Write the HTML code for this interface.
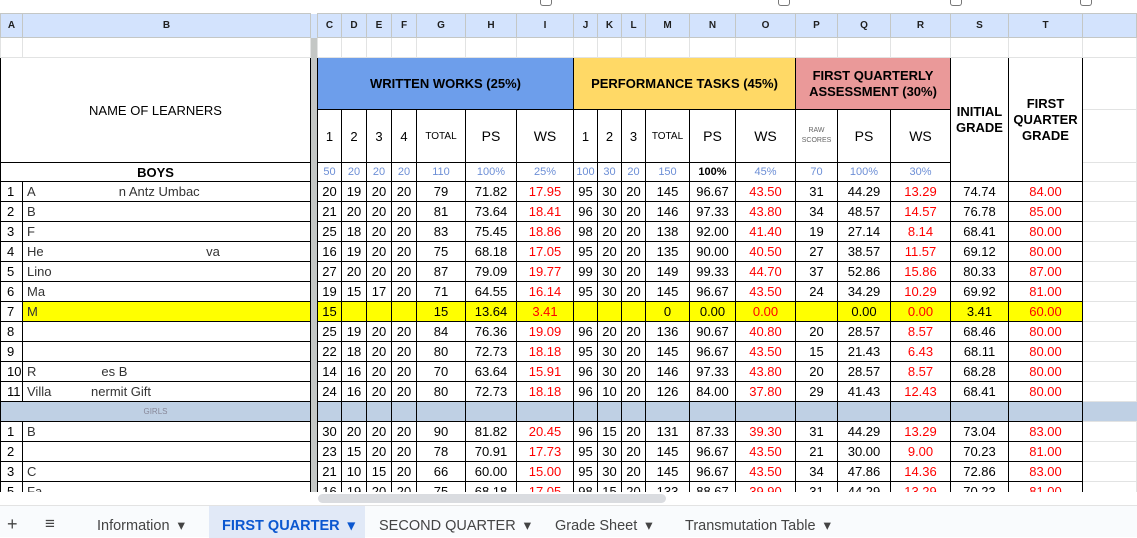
<!DOCTYPE html>
<html><head><meta charset="utf-8">
<style>
*{box-sizing:border-box;margin:0;padding:0}
body{width:1137px;height:537px;overflow:hidden;background:#fff;font-family:"Liberation Sans",Arial,sans-serif;position:relative}
#top{position:absolute;left:0;top:0;width:1137px;height:13px;background:#fff}
#grid{position:absolute;left:0;top:13px;width:1137px;height:479px;overflow:hidden}
table{border-collapse:collapse;table-layout:fixed}
td{border:1px solid #000;text-align:center;font-size:13px;color:#000;white-space:nowrap;overflow:hidden;padding:0;line-height:15px}
tr.ch td{background:#d3e3fd;border:1px solid #c4c7c5;font-size:10px;font-weight:bold;color:#1f1f1f;height:24px}
tr.r1 td{border:1px solid #e2e3e3;height:20px}
td.fz{background:#c4c7c5;border:none!important;border-left:1px solid #000}
td.x{border:1px solid #e2e3e3}
td.nm{text-align:left;padding-left:4px;color:#333}
td.n{text-align:left;padding-left:6px}
.r{color:#f00}
.mx td{color:#6d8fd6;font-size:11px}
tr.d td{height:20px}
tr.y td{background:#ff0}
tr.y td.n,tr.y td.x{background:#fff}
tr.y td.fz{background:#c4c7c5}
tr.g td{background:#bfd0e4;height:20px}
tr.g td.fz{background:#c4c7c5}
#sb{position:absolute;left:0;top:492px;width:1137px;height:13px;background:#fff}
#thumb{position:absolute;left:318px;top:494px;width:348px;height:9px;background:#dadce0;border-radius:5px}
#tabs{position:absolute;left:0;top:505px;width:1137px;height:32px;background:#f9fbfd;border-top:1px solid #e3e3e3;font-size:14.5px;color:#444}
#tabs span{position:absolute;top:12px}
#act{position:absolute;left:209px;top:0;width:156px;height:32px;background:#e1e9f7}
</style></head><body>
<div id="top">
<div style="position:absolute;left:540px;top:0;width:12px;height:6px;border:1px solid #777;border-top:none;border-radius:0 0 3px 3px"></div>
<div style="position:absolute;left:778px;top:0;width:12px;height:6px;border:1px solid #777;border-top:none;border-radius:0 0 3px 3px"></div>
<div style="position:absolute;left:950px;top:0;width:12px;height:6px;border:1px solid #777;border-top:none;border-radius:0 0 3px 3px"></div>
<div style="position:absolute;left:1080px;top:0;width:12px;height:6px;border:1px solid #777;border-top:none;border-radius:0 0 3px 3px"></div>
</div>
<div id="grid">
<table>
<colgroup><col style="width:22px"><col style="width:288px"><col style="width:7px"><col style="width:24px"><col style="width:25px"><col style="width:25px"><col style="width:25px"><col style="width:49px"><col style="width:51px"><col style="width:57px"><col style="width:24px"><col style="width:24px"><col style="width:24px"><col style="width:44px"><col style="width:46px"><col style="width:60px"><col style="width:42px"><col style="width:53px"><col style="width:60px"><col style="width:58px"><col style="width:74px"><col style="width:54px"></colgroup>
<tr class="ch"><td>A</td><td>B</td><td class="fz"></td><td>C</td><td>D</td><td>E</td><td>F</td><td>G</td><td>H</td><td>I</td><td>J</td><td>K</td><td>L</td><td>M</td><td>N</td><td>O</td><td>P</td><td>Q</td><td>R</td><td>S</td><td>T</td><td></td></tr>
<tr class="r1"><td></td><td></td><td class="fz" style="border-left:none"></td><td></td><td></td><td></td><td></td><td></td><td></td><td></td><td></td><td></td><td></td><td></td><td></td><td></td><td></td><td></td><td></td><td></td><td></td><td></td></tr>
<tr style="height:52px"><td colspan="2" rowspan="2" style="font-size:13px">NAME OF LEARNERS</td><td class="fz" rowspan="2"></td><td colspan="7" style="background:#6d9eeb;font-weight:bold;font-size:13px">WRITTEN WORKS (25%)</td><td colspan="6" style="background:#ffd966;font-weight:bold;font-size:13px">PERFORMANCE TASKS (45%)</td><td colspan="3" style="background:#ea9999;font-weight:bold;font-size:13px;line-height:16px">FIRST QUARTERLY<br>ASSESSMENT (30%)</td><td rowspan="3" style="font-weight:bold;font-size:13px;line-height:16px">INITIAL<br>GRADE</td><td rowspan="3" style="font-weight:bold;font-size:13px;line-height:16px">FIRST<br>QUARTER<br>GRADE</td><td class="x"></td></tr>
<tr style="height:53px;font-size:13px"><td style="font-size:13px">1</td><td style="font-size:13px">2</td><td style="font-size:13px">3</td><td style="font-size:13px">4</td><td style="font-size:10px">TOTAL</td><td style="font-size:14px">PS</td><td style="font-size:14px">WS</td><td style="font-size:13px">1</td><td style="font-size:13px">2</td><td style="font-size:13px">3</td><td style="font-size:10px">TOTAL</td><td style="font-size:14px">PS</td><td style="font-size:14px">WS</td><td style="font-size:7px;line-height:10px;color:#666">RAW<br>SCORES</td><td style="font-size:14px">PS</td><td style="font-size:14px">WS</td><td class="x"></td></tr>
<tr class="mx" style="height:19px"><td colspan="2" style="font-weight:bold;font-size:13px;color:#000">BOYS</td><td class="fz"></td><td>50</td><td>20</td><td>20</td><td>20</td><td>110</td><td>100%</td><td>25%</td><td>100</td><td>30</td><td>20</td><td>150</td><td style="color:#000;font-weight:bold">100%</td><td>45%</td><td>70</td><td>100%</td><td>30%</td><td class="x"></td></tr>
<tr class="d"><td class="n">1</td><td class="nm">A&nbsp;&nbsp;&nbsp;&nbsp;&nbsp;&nbsp;&nbsp;&nbsp;&nbsp;&nbsp;&nbsp;&nbsp;&nbsp;&nbsp;&nbsp;&nbsp;&nbsp;&nbsp;&nbsp;&nbsp;&nbsp;&nbsp;&nbsp;n Antz Umbac</td><td class="fz"></td><td>20</td><td>19</td><td>20</td><td>20</td><td>79</td><td>71.82</td><td class="r">17.95</td><td>95</td><td>30</td><td>20</td><td>145</td><td>96.67</td><td class="r">43.50</td><td>31</td><td>44.29</td><td class="r">13.29</td><td>74.74</td><td class="r">84.00</td><td class="x"></td></tr>
<tr class="d"><td class="n">2</td><td class="nm">B</td><td class="fz"></td><td>21</td><td>20</td><td>20</td><td>20</td><td>81</td><td>73.64</td><td class="r">18.41</td><td>96</td><td>30</td><td>20</td><td>146</td><td>97.33</td><td class="r">43.80</td><td>34</td><td>48.57</td><td class="r">14.57</td><td>76.78</td><td class="r">85.00</td><td class="x"></td></tr>
<tr class="d"><td class="n">3</td><td class="nm">F</td><td class="fz"></td><td>25</td><td>18</td><td>20</td><td>20</td><td>83</td><td>75.45</td><td class="r">18.86</td><td>98</td><td>20</td><td>20</td><td>138</td><td>92.00</td><td class="r">41.40</td><td>19</td><td>27.14</td><td class="r">8.14</td><td>68.41</td><td class="r">80.00</td><td class="x"></td></tr>
<tr class="d"><td class="n">4</td><td class="nm">He&nbsp;&nbsp;&nbsp;&nbsp;&nbsp;&nbsp;&nbsp;&nbsp;&nbsp;&nbsp;&nbsp;&nbsp;&nbsp;&nbsp;&nbsp;&nbsp;&nbsp;&nbsp;&nbsp;&nbsp;&nbsp;&nbsp;&nbsp;&nbsp;&nbsp;&nbsp;&nbsp;&nbsp;&nbsp;&nbsp;&nbsp;&nbsp;&nbsp;&nbsp;&nbsp;&nbsp;&nbsp;&nbsp;&nbsp;&nbsp;&nbsp;&nbsp;&nbsp;&nbsp;&nbsp;va</td><td class="fz"></td><td>16</td><td>19</td><td>20</td><td>20</td><td>75</td><td>68.18</td><td class="r">17.05</td><td>95</td><td>20</td><td>20</td><td>135</td><td>90.00</td><td class="r">40.50</td><td>27</td><td>38.57</td><td class="r">11.57</td><td>69.12</td><td class="r">80.00</td><td class="x"></td></tr>
<tr class="d"><td class="n">5</td><td class="nm">Lino</td><td class="fz"></td><td>27</td><td>20</td><td>20</td><td>20</td><td>87</td><td>79.09</td><td class="r">19.77</td><td>99</td><td>30</td><td>20</td><td>149</td><td>99.33</td><td class="r">44.70</td><td>37</td><td>52.86</td><td class="r">15.86</td><td>80.33</td><td class="r">87.00</td><td class="x"></td></tr>
<tr class="d"><td class="n">6</td><td class="nm">Ma</td><td class="fz"></td><td>19</td><td>15</td><td>17</td><td>20</td><td>71</td><td>64.55</td><td class="r">16.14</td><td>95</td><td>30</td><td>20</td><td>145</td><td>96.67</td><td class="r">43.50</td><td>24</td><td>34.29</td><td class="r">10.29</td><td>69.92</td><td class="r">81.00</td><td class="x"></td></tr>
<tr class="d y"><td class="n">7</td><td class="nm">M</td><td class="fz"></td><td>15</td><td></td><td></td><td></td><td>15</td><td>13.64</td><td class="r">3.41</td><td></td><td></td><td></td><td>0</td><td>0.00</td><td class="r">0.00</td><td></td><td>0.00</td><td class="r">0.00</td><td>3.41</td><td class="r">60.00</td><td class="x"></td></tr>
<tr class="d"><td class="n">8</td><td class="nm"></td><td class="fz"></td><td>25</td><td>19</td><td>20</td><td>20</td><td>84</td><td>76.36</td><td class="r">19.09</td><td>96</td><td>20</td><td>20</td><td>136</td><td>90.67</td><td class="r">40.80</td><td>20</td><td>28.57</td><td class="r">8.57</td><td>68.46</td><td class="r">80.00</td><td class="x"></td></tr>
<tr class="d"><td class="n">9</td><td class="nm"></td><td class="fz"></td><td>22</td><td>18</td><td>20</td><td>20</td><td>80</td><td>72.73</td><td class="r">18.18</td><td>95</td><td>30</td><td>20</td><td>145</td><td>96.67</td><td class="r">43.50</td><td>15</td><td>21.43</td><td class="r">6.43</td><td>68.11</td><td class="r">80.00</td><td class="x"></td></tr>
<tr class="d"><td class="n">10</td><td class="nm">R&nbsp;&nbsp;&nbsp;&nbsp;&nbsp;&nbsp;&nbsp;&nbsp;&nbsp;&nbsp;&nbsp;&nbsp;&nbsp;&nbsp;&nbsp;&nbsp;&nbsp;&nbsp;es B</td><td class="fz"></td><td>14</td><td>16</td><td>20</td><td>20</td><td>70</td><td>63.64</td><td class="r">15.91</td><td>96</td><td>30</td><td>20</td><td>146</td><td>97.33</td><td class="r">43.80</td><td>20</td><td>28.57</td><td class="r">8.57</td><td>68.28</td><td class="r">80.00</td><td class="x"></td></tr>
<tr class="d"><td class="n">11</td><td class="nm">Villa&nbsp;&nbsp;&nbsp;&nbsp;&nbsp;&nbsp;&nbsp;&nbsp;&nbsp;&nbsp;&nbsp;nermit Gift</td><td class="fz"></td><td>24</td><td>16</td><td>20</td><td>20</td><td>80</td><td>72.73</td><td class="r">18.18</td><td>96</td><td>10</td><td>20</td><td>126</td><td>84.00</td><td class="r">37.80</td><td>29</td><td>41.43</td><td class="r">12.43</td><td>68.41</td><td class="r">80.00</td><td class="x"></td></tr>
<tr class="g"><td colspan="2" style="font-size:8px;color:#889">GIRLS</td><td class="fz"></td><td></td><td></td><td></td><td></td><td></td><td></td><td></td><td></td><td></td><td></td><td></td><td></td><td></td><td></td><td></td><td></td><td></td><td></td><td style="border:none"></td></tr>
<tr class="d"><td class="n">1</td><td class="nm">B</td><td class="fz"></td><td>30</td><td>20</td><td>20</td><td>20</td><td>90</td><td>81.82</td><td class="r">20.45</td><td>96</td><td>15</td><td>20</td><td>131</td><td>87.33</td><td class="r">39.30</td><td>31</td><td>44.29</td><td class="r">13.29</td><td>73.04</td><td class="r">83.00</td><td class="x"></td></tr>
<tr class="d"><td class="n">2</td><td class="nm"></td><td class="fz"></td><td>23</td><td>15</td><td>20</td><td>20</td><td>78</td><td>70.91</td><td class="r">17.73</td><td>95</td><td>30</td><td>20</td><td>145</td><td>96.67</td><td class="r">43.50</td><td>21</td><td>30.00</td><td class="r">9.00</td><td>70.23</td><td class="r">81.00</td><td class="x"></td></tr>
<tr class="d"><td class="n">3</td><td class="nm">C</td><td class="fz"></td><td>21</td><td>10</td><td>15</td><td>20</td><td>66</td><td>60.00</td><td class="r">15.00</td><td>95</td><td>30</td><td>20</td><td>145</td><td>96.67</td><td class="r">43.50</td><td>34</td><td>47.86</td><td class="r">14.36</td><td>72.86</td><td class="r">83.00</td><td class="x"></td></tr>
<tr class="d"><td class="n">5</td><td class="nm">Fa</td><td class="fz"></td><td>16</td><td>19</td><td>20</td><td>20</td><td>75</td><td>68.18</td><td class="r">17.05</td><td>98</td><td>15</td><td>20</td><td>133</td><td>88.67</td><td class="r">39.90</td><td>31</td><td>44.29</td><td class="r">13.29</td><td>70.23</td><td class="r">81.00</td><td class="x"></td></tr>
</table>
</div>
<div id="sb"></div><div id="thumb"></div>
<div id="tabs">
<div id="act"></div>
<span style="left:7px;font-size:18px;top:8px">+</span>
<span style="left:45px;font-size:17px;top:8px">&#8801;</span>
<span style="left:97px">Information&nbsp;&nbsp;▾</span>
<span style="left:222px;color:#0b57d0;font-weight:bold">FIRST QUARTER&nbsp;&nbsp;▾</span>
<span style="left:379px">SECOND QUARTER&nbsp;&nbsp;▾</span>
<span style="left:555px">Grade Sheet&nbsp;&nbsp;▾</span>
<span style="left:685px">Transmutation Table&nbsp;&nbsp;▾</span>
</div>
</body></html>
